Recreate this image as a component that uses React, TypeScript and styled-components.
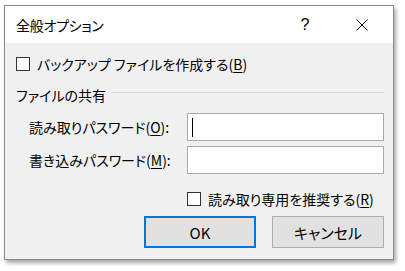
import * as React from "react";
import styled, { createGlobalStyle } from "styled-components";

const GlobalStyle = createGlobalStyle`
  html, body {
    margin: 0;
    padding: 0;
    background: #ffffff;
  }
  body {
    font-family: "Noto Sans CJK JP", "Liberation Sans", sans-serif;
    font-feature-settings: "palt";
    color: #000;
  }
`;

const Page = styled.div`
  padding: 5px 0 0 4px;
  width: 405px;
  height: 271px;
  box-sizing: border-box;
`;

const Window = styled.div`
  width: 390px;
  height: 255px;
  box-sizing: border-box;
  border: 1px solid #8a8a8a;
  background: #f0f0f0;
  box-shadow: 2px 3px 4px rgba(0, 0, 0, 0.35);
  display: flex;
  flex-direction: column;
`;

const TitleBar = styled.div`
  height: 37px;
  background: #ffffff;
  display: flex;
  align-items: center;
  padding: 0 8px 0 11px;
`;

const Title = styled.div`
  flex: 1;
  font-size: 14px;
  line-height: 18px;
  letter-spacing: -0.3px;
`;

const TitleButton = styled.div<{ $gap?: number }>`
  width: 46px;
  height: 37px;
  margin-left: ${(p) => p.$gap ?? 0}px;
  display: flex;
  align-items: center;
  justify-content: center;
  font-family: "Liberation Sans", sans-serif;
  font-size: 16px;
`;

const Body = styled.div`
  flex: 1;
  display: flex;
  flex-direction: column;
  padding: 11px 9px 0 11px;
`;

const CheckRow = styled.label<{ $indent?: number; $top?: number }>`
  height: 20px;
  display: flex;
  align-items: center;
  gap: 7px;
  margin-top: ${(p) => p.$top ?? 0}px;
  padding-left: ${(p) => p.$indent ?? 0}px;
  font-size: 14px;
  white-space: nowrap;
`;

const Box = styled.span`
  width: 14px;
  height: 14px;
  box-sizing: border-box;
  border: 1px solid #333333;
  background: #ffffff;
  flex: none;
`;

const Key = styled.u`
  text-underline-offset: 2px;
`;

const GroupHeader = styled.div`
  margin-top: 11px;
  height: 20px;
  display: flex;
  align-items: center;
  gap: 5px;
  font-size: 14px;
  white-space: nowrap;
`;

const Rule = styled.div`
  flex: 1;
  height: 1px;
  margin-top: -6px;
  background: #dcdcdc;
`;

const Fields = styled.div`
  margin-top: 8px;
  display: grid;
  grid-template-columns: 158px 1fr;
  row-gap: 5px;
  padding-left: 13px;
`;

const FieldLabel = styled.div`
  height: 28px;
  display: flex;
  align-items: center;
  font-size: 14px;
  white-space: nowrap;
`;

const Input = styled.div`
  height: 28px;
  box-sizing: border-box;
  border: 1px solid #a9a9a9;
  background: #ffffff;
  display: flex;
  align-items: center;
  padding-left: 4px;
`;

const Caret = styled.span`
  width: 1px;
  height: 19px;
  background: #000000;
`;

const Buttons = styled.div`
  margin-top: 7px;
  display: flex;
  justify-content: flex-end;
  gap: 16px;
`;

const Button = styled.div<{ $focused?: boolean }>`
  width: 112px;
  height: 32px;
  box-sizing: border-box;
  border: ${(p) => (p.$focused ? "2px solid #0078d7" : "1px solid #adadad")};
  background: #e1e1e1;
  display: flex;
  align-items: center;
  justify-content: center;
  font-size: 15px;
`;

function CloseIcon() {
  return (
    <svg width="12" height="12" viewBox="0 0 12 12">
      <path d="M0.5 0.5 L11.5 11.5 M11.5 0.5 L0.5 11.5" stroke="#000" strokeWidth="1" fill="none" />
    </svg>
  );
}

export default function App() {
  return (
    <Page>
      <GlobalStyle />
      <Window>
        <TitleBar>
          <Title>全般オプション</Title>
          <TitleButton>?</TitleButton>
          <TitleButton $gap={11}>
            <CloseIcon />
          </TitleButton>
        </TitleBar>
        <Body>
          <CheckRow>
            <Box />
            <span>
              バックアップ ファイルを作成する(<Key>B</Key>)
            </span>
          </CheckRow>
          <GroupHeader>
            <span>ファイルの共有</span>
            <Rule />
          </GroupHeader>
          <Fields>
            <FieldLabel>
              読み取りパスワード(<Key>O</Key>):
            </FieldLabel>
            <Input>
              <Caret />
            </Input>
            <FieldLabel>
              書き込みパスワード(<Key>M</Key>):
            </FieldLabel>
            <Input />
          </Fields>
          <CheckRow $indent={171} $top={15}>
            <Box />
            <span>
              読み取り専用を推奨する(<Key>R</Key>)
            </span>
          </CheckRow>
          <Buttons>
            <Button $focused>OK</Button>
            <Button>キャンセル</Button>
          </Buttons>
        </Body>
      </Window>
    </Page>
  );
}
